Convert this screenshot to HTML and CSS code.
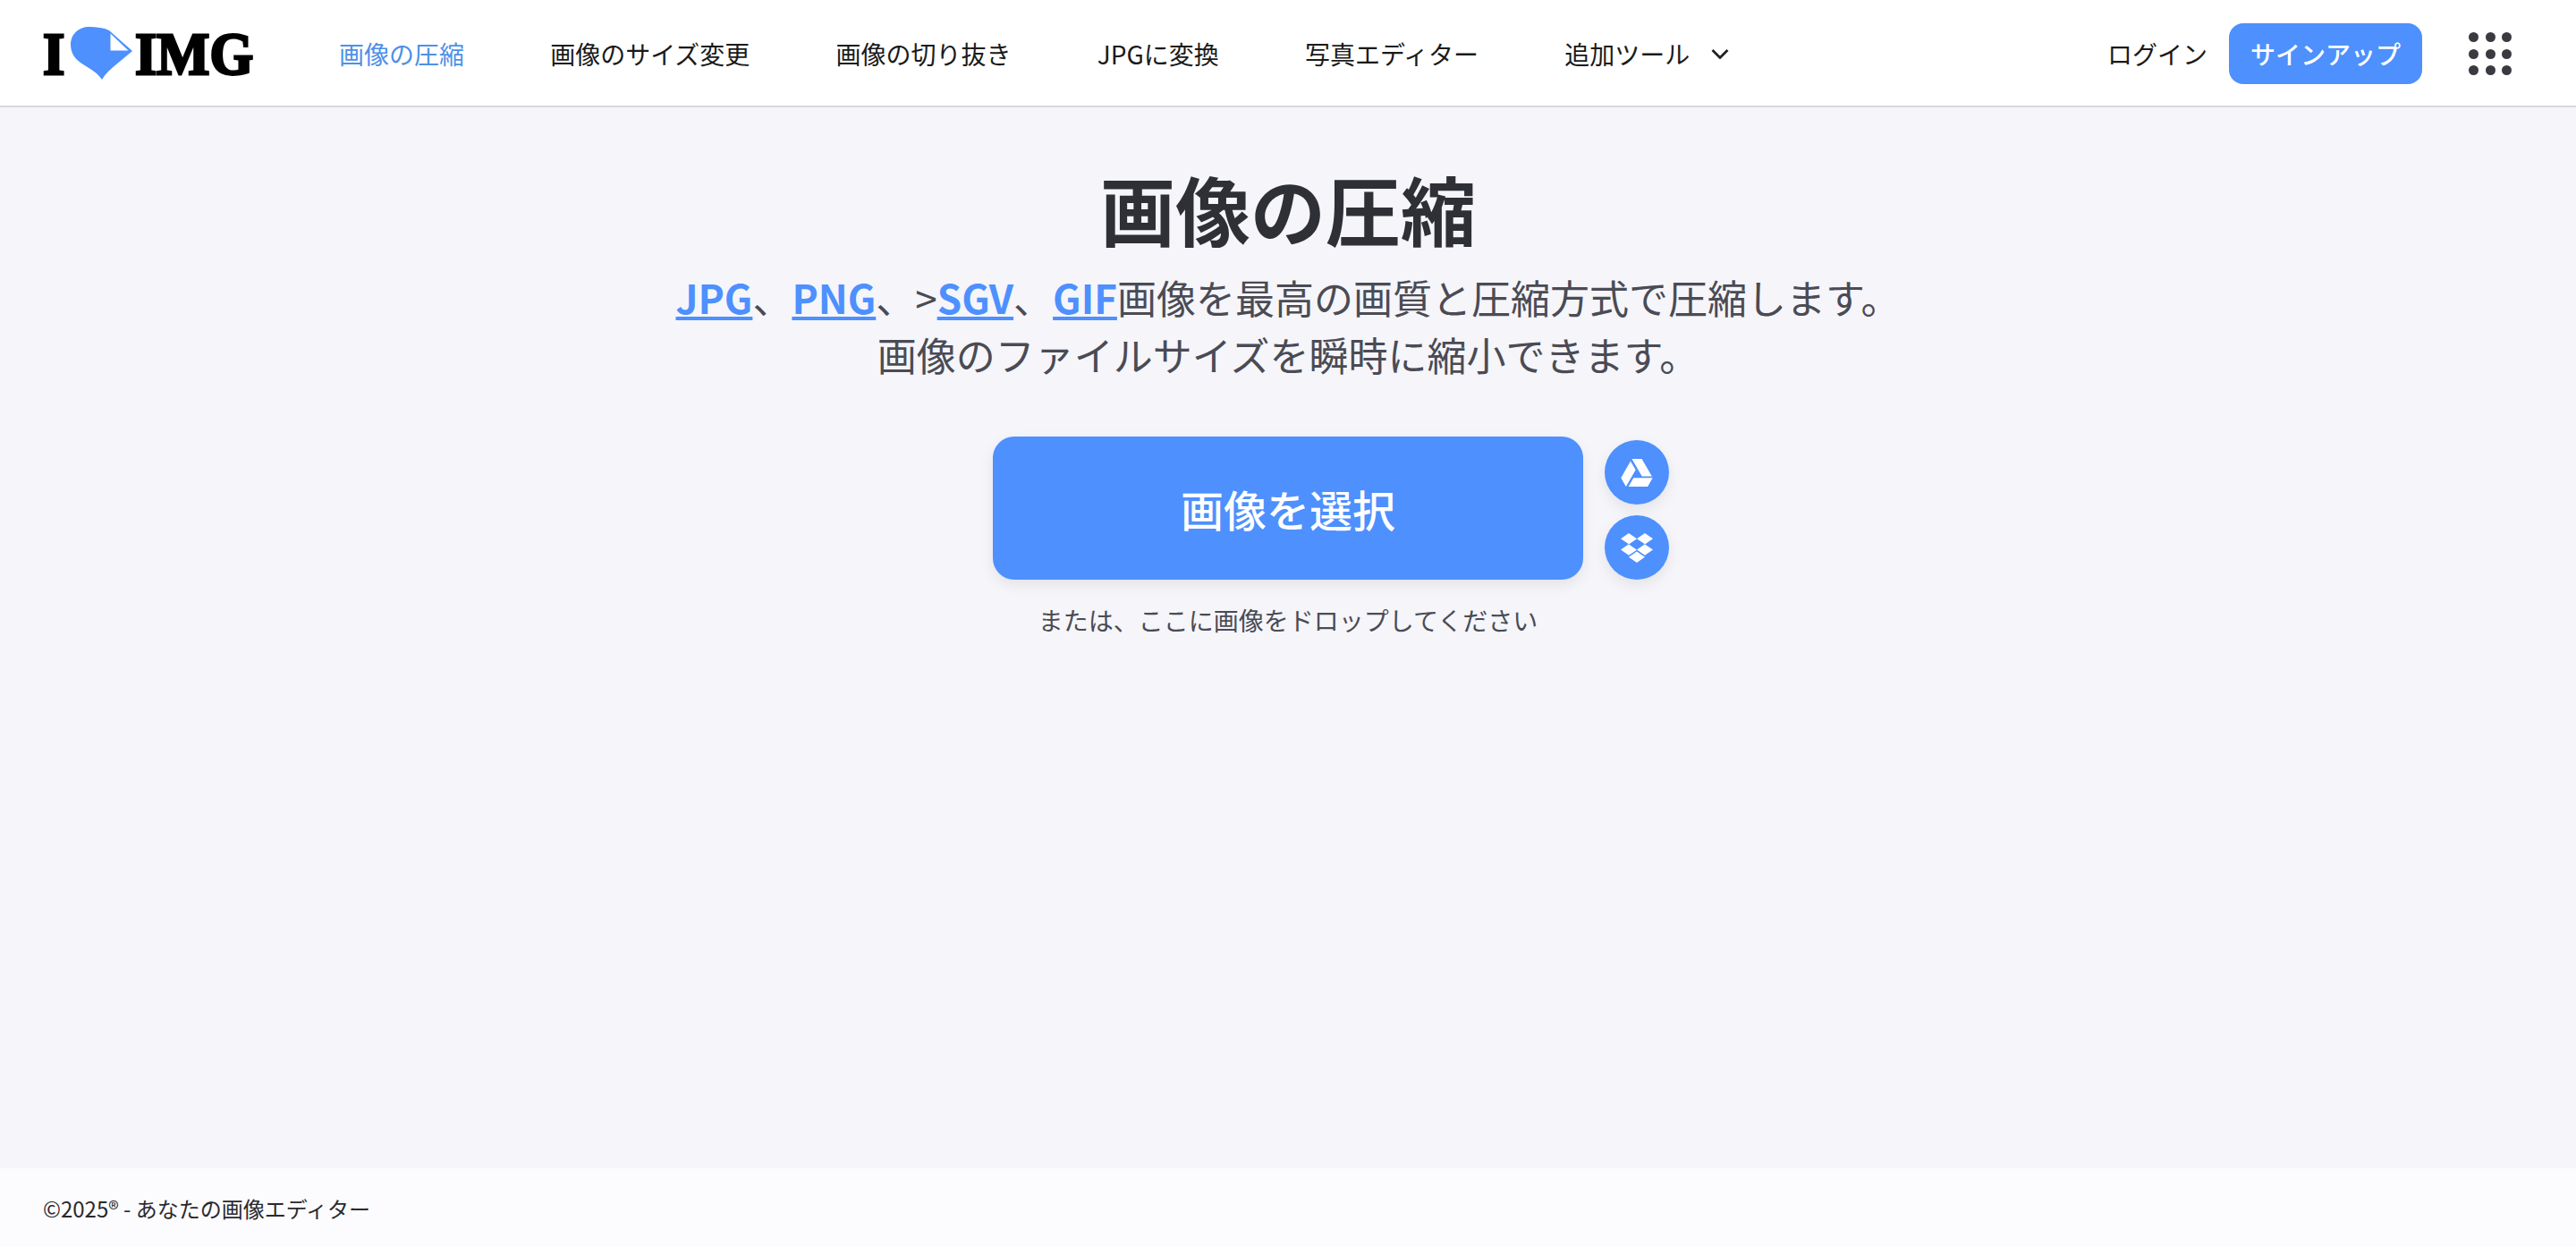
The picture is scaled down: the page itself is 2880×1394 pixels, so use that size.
FILE: index.html
```html
<!DOCTYPE html>
<html lang="ja">
<head>
    <meta charset="UTF-8">
    <meta name="viewport" content="width=device-width, initial-scale=1.0">
    <title>画像の圧縮 - I Love IMG</title>
    <link rel="stylesheet" href="styles.css">
</head>
<body>
    <header class="header">
        <a class="logo" href="#">
            <span class="logo-text">I</span>
            <svg class="logo-heart" viewBox="0 0 69 59" width="69" height="59" aria-hidden="true">
                <path fill="#4d90fe" d="M43 4C37 1 29 0 21 0C9 0 0 8 0 20C0 29 5 36 11 40C20 46 30 51 35 59C39 52 45 47 51 42L69 27Z"/>
                <path fill="#fff" d="M44.5 7.5L64.5 26.5H44.5Z"/>
            </svg>
            <span class="logo-text">IMG</span>
        </a>
        <nav class="nav">
            <a class="nav-link active" href="#">画像の圧縮</a>
            <a class="nav-link" href="#">画像のサイズ変更</a>
            <a class="nav-link" href="#">画像の切り抜き</a>
            <a class="nav-link" href="#">JPGに変換</a>
            <a class="nav-link" href="#">写真エディター</a>
            <a class="nav-link more" href="#">追加ツール
                <svg class="chevron" viewBox="0 0 20 11" width="20" height="11" aria-hidden="true">
                    <path d="M1.5 1L10 9.5L18.5 1" fill="none" stroke="#222" stroke-width="2.8"/>
                </svg>
            </a>
        </nav>
        <div class="account">
            <a class="nav-link" href="#">ログイン</a>
            <a class="signup-btn" href="#">サインアップ</a>
            <div class="apps">
                <span></span><span></span><span></span>
                <span></span><span></span><span></span>
                <span></span><span></span><span></span>
            </div>
        </div>
    </header>

    <main class="main">
        <h1>画像の圧縮</h1>
        <p class="intro">
            <a href="#">JPG</a>、<a href="#">PNG</a>、&gt;<a href="#">SGV</a>、<a href="#">GIF</a>画像を最高の画質と圧縮方式で圧縮します。<br>
            画像のファイルサイズを瞬時に縮小できます。
        </p>
        <div class="upload">
            <button class="select-btn" type="button">画像を選択</button>
            <div class="cloud-btns">
                <a class="cloud-btn" href="#" aria-label="Google Drive">
                    <svg viewBox="0 32 512 448" width="36" height="31" aria-hidden="true">
                        <path fill="#fff" d="M339 314.9L175.4 32h161.2l163.6 282.9H339zm-137.5 23.6L120.9 480h310.5L512 338.5H201.5zM154.1 67.4L0 338.5 80.6 480 237 208.8 154.1 67.4z"/>
                    </svg>
                </a>
                <a class="cloud-btn" href="#" aria-label="Dropbox">
                    <svg viewBox="0 32 528 448" width="36" height="33" preserveAspectRatio="none" aria-hidden="true">
                        <path fill="#fff" d="M264.4 116.3l-132 84.3 132 84.3-132 84.3L0 284.1l132.3-84.3L0 116.3 132.3 32l132.1 84.3zM131.6 395.7l132-84.3 132 84.3-132 84.3-132-84.3zm132.8-111.6l132-84.3-132-83.6L395.7 32 528 116.3l-132.3 84.3L528 284.8l-132.3 84.3-131.3-85z"/>
                    </svg>
                </a>
            </div>
        </div>
        <p class="drop-hint">または、ここに画像をドロップしてください</p>
    </main>

    <footer class="footer">©2025® - あなたの画像エディター</footer>
</body>
</html>
```

FILE: styles.css
```css
* {
    margin: 0;
    padding: 0;
    box-sizing: border-box;
    font-family: "Noto Sans CJK JP", "Noto Sans", sans-serif;
}
body {
    background-color: #f5f5fa;
    color: #2f3036;
    min-height: 100vh;
    display: flex;
    flex-direction: column;
}
a {
    text-decoration: none;
}
.header {
    display: flex;
    align-items: center;
    height: 120px;
    padding: 2px 72px 0 48px;
    background-color: white;
    border-bottom: 2px solid #d8d8dc;
}
.logo {
    display: flex;
    align-items: center;
    width: 331px;
    color: black;
}
.logo-text {
    display: inline-block;
    font-family: "Liberation Serif", serif;
    font-size: 68px;
    font-weight: 700;
    line-height: 1;
    -webkit-text-stroke: 3px black;
    transform: scaleX(0.92);
    transform-origin: left center;
}
.logo-heart {
    margin: -2px 3px 0 5px;
}
.nav {
    display: flex;
    align-items: center;
    gap: 96.2px;
}
.nav-link {
    font-size: 28px;
    line-height: 40px;
    color: #1a1a1a;
    white-space: nowrap;
}
.nav-link.active {
    color: #4d90e8;
}
.more {
    display: flex;
    align-items: center;
    gap: 24px;
}
.account {
    display: flex;
    align-items: center;
    margin-left: auto;
    gap: 24px;
}
.signup-btn {
    padding: 0 24px;
    font-size: 28px;
    font-weight: 500;
    line-height: 68px;
    color: white;
    background-color: #4d90fe;
    border-radius: 16px;
}
.apps {
    display: grid;
    grid-template-columns: repeat(3, 11px);
    gap: 7.5px;
    margin-left: 28px;
}
.apps span {
    width: 11px;
    height: 11px;
    border-radius: 50%;
    background-color: #3a3b40;
}
.main {
    flex: 1;
    display: flex;
    flex-direction: column;
    align-items: center;
    padding-top: 61px;
}
h1 {
    font-size: 84px;
    font-weight: 700;
    line-height: 104px;
}
.intro {
    margin-top: 15px;
    font-size: 44px;
    line-height: 64px;
    text-align: center;
    color: #4a4b54;
}
.intro a {
    color: #4d90fe;
    font-weight: 700;
    text-decoration: underline;
}
.upload {
    display: grid;
    grid-template-columns: 1fr 660px 1fr;
    column-gap: 24px;
    width: 100%;
    margin-top: 60px;
}
.select-btn {
    grid-column: 2;
    height: 160px;
    border: none;
    border-radius: 24px;
    font-size: 48px;
    font-weight: 500;
    color: white;
    background-color: #4d90fe;
    box-shadow: 0 6px 16px rgba(0, 0, 0, 0.08);
    cursor: pointer;
}
.cloud-btns {
    display: flex;
    flex-direction: column;
    justify-content: flex-end;
    gap: 12px;
}
.cloud-btn {
    display: flex;
    align-items: center;
    justify-content: center;
    width: 72px;
    height: 72px;
    border-radius: 50%;
    background-color: #4d90fe;
    box-shadow: 0 6px 16px rgba(0, 0, 0, 0.08);
}
.drop-hint {
    margin-top: 25px;
    font-size: 28px;
    line-height: 40px;
    color: #4a4b54;
}
.footer {
    display: flex;
    align-items: center;
    height: 88px;
    padding-left: 48px;
    font-size: 24px;
    color: #2a2a2e;
    background-color: #fcfcfe;
}
```
